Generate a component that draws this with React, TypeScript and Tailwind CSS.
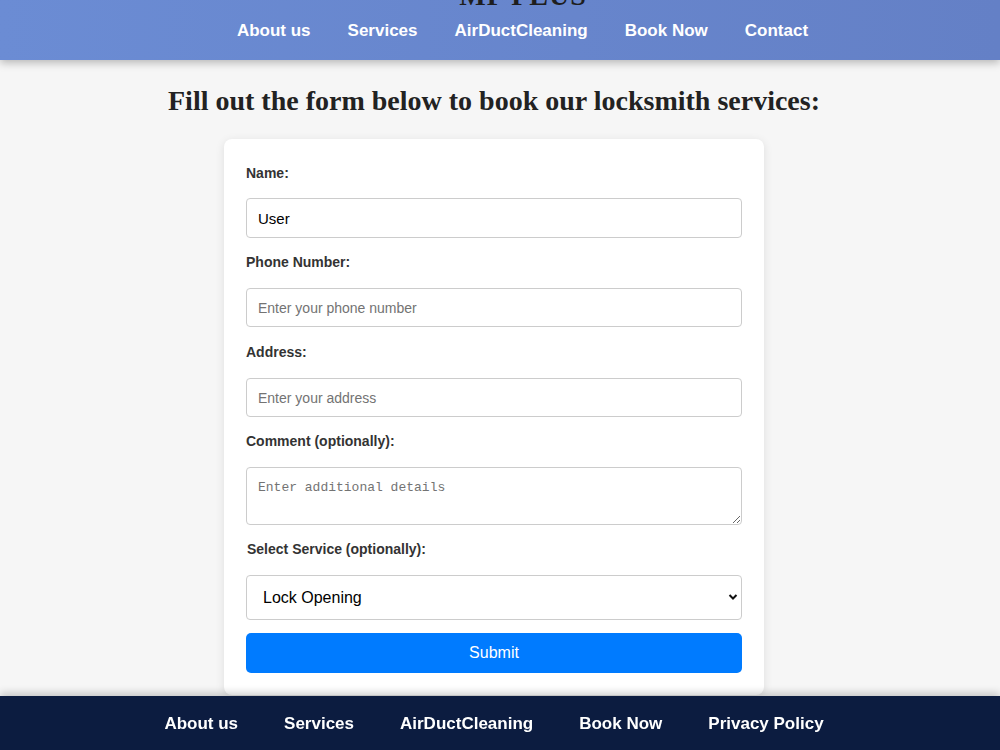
import React from "react";

const navTop = ["About us", "Services", "AirDuctCleaning", "Book Now", "Contact"];
const navBottom = ["About us", "Services", "AirDuctCleaning", "Book Now", "Privacy Policy"];

function Label({ children, className = "" }: { children: React.ReactNode; className?: string }) {
  return (
    <label
      className={`block text-[14px] leading-4 font-bold text-[#333] ${className}`}
      style={{ fontFamily: '"Liberation Sans", Arial, sans-serif' }}
    >
      {children}
    </label>
  );
}

export default function App() {
  const sans = { fontFamily: '"Liberation Sans", Arial, sans-serif' };
  return (
    <div className="min-h-[750px] bg-[#f6f6f6]" style={sans}>
      <header className="bg-gradient-to-r from-[#6b8cd4] to-[#6480c6] shadow-[0_3px_8px_rgba(0,0,0,0.25)] pb-[8px]">
        <div className="h-[10px] overflow-hidden flex items-end justify-center pl-[46px]">
          <span
            className="text-[28px] leading-none font-bold text-[#1e1e1e] tracking-[1px]"
            style={{ fontFamily: '"Liberation Serif", "DejaVu Serif", serif' }}
          >
            MP PLUS
          </span>
        </div>
        <nav className="h-[42px] flex items-center justify-center gap-[37px] pl-[45px]">
          {navTop.map((n) => (
            <a key={n} className="text-white font-bold text-[17px]">
              {n}
            </a>
          ))}
        </nav>
      </header>

      <main className="pr-[12px] pb-[80px]">
        <h1
          className="text-center text-[28px] leading-[32px] font-bold text-[#222] pt-[25px] mb-[22px]"
          style={{ fontFamily: '"Liberation Serif", "DejaVu Serif", serif' }}
        >
          Fill out the form below to book our locksmith services:
        </h1>
        <form className="mx-auto w-[540px] bg-white rounded-[8px] shadow-[0_2px_10px_rgba(0,0,0,0.1)] px-[22px] pt-[26px] pb-[22px] flex flex-col">
          <Label className="mb-[17px]">Name:</Label>
          <input
            className="h-[40px] border border-[#cccccc] rounded-[4px] px-[11px] text-[15px] text-black mb-[16px] outline-none"
            defaultValue="User"
          />
          <Label className="mb-[18px]">Phone Number:</Label>
          <input
            className="h-[39px] border border-[#cccccc] rounded-[4px] px-[11px] text-[14px] text-black placeholder:text-[#737373] mb-[17px] outline-none"
            placeholder="Enter your phone number"
          />
          <Label className="mb-[18px]">Address:</Label>
          <input
            className="h-[39px] border border-[#cccccc] rounded-[4px] px-[11px] text-[14px] text-black placeholder:text-[#737373] mb-[16px] outline-none"
            placeholder="Enter your address"
          />
          <Label className="mb-[18px]">Comment (optionally):</Label>
          <textarea
            className="h-[58px] border border-[#cccccc] rounded-[4px] px-[11px] py-[12px] text-[13px] leading-[15px] text-black placeholder:text-[#737373] mb-[16px] outline-none"
            style={{ fontFamily: '"Liberation Mono", monospace' }}
            placeholder="Enter additional details"
          />
          <Label className="mb-[18px] pl-[1px]">Select Service (optionally):</Label>
          <div className="relative mb-[13px]">
            <select
              className="w-full h-[45px] border border-[#cccccc] rounded-[4px] pl-[16px] pr-[30px] text-[16px] text-black bg-white appearance-none outline-none"
              defaultValue="Lock Opening"
            >
              <option>Lock Opening</option>
              <option>Lock Replacement</option>
              <option>Key Duplication</option>
            </select>
            <svg
              className="absolute right-[4px] top-[17px] pointer-events-none"
              width="10"
              height="10"
              viewBox="0 0 10 10"
            >
              <path d="M1.5 3 L5 6.5 L8.5 3" stroke="#111" strokeWidth="2" fill="none" />
            </svg>
          </div>
          <button
            type="button"
            className="h-[40px] bg-[#007bff] rounded-[5px] text-white text-[16px]"
          >
            Submit
          </button>
        </form>
      </main>

      <footer className="fixed bottom-0 left-0 right-0 h-[54px] bg-[#0c1c40] shadow-[0_-3px_8px_rgba(0,0,0,0.2)] flex items-center justify-center gap-[46px] pr-[12px] pt-[2px]">
        {navBottom.map((n) => (
          <a key={n} className="text-white font-bold text-[17px]">
            {n}
          </a>
        ))}
      </footer>
    </div>
  );
}
